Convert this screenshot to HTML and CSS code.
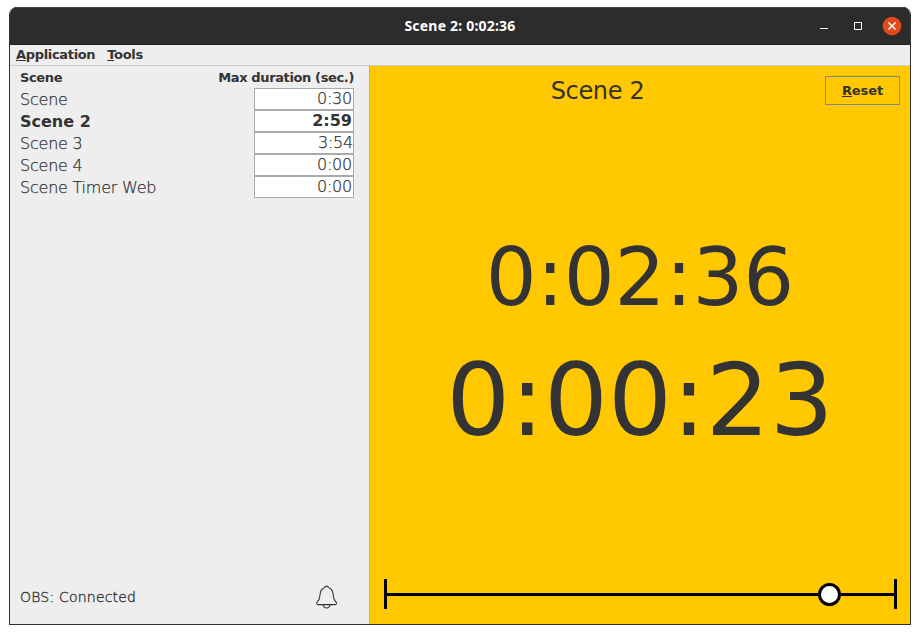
FILE: index.html
```html
<!DOCTYPE html>
<html lang="en">
<head>
<meta charset="utf-8">
<title>Scene 2: 0:02:36</title>
<link rel="stylesheet" href="styles.css">
</head>
<body>
<div class="window">
  <header class="titlebar">
    <span class="title">Scene 2: 0:02:36</span>
    <div class="controls">
      <svg width="10" height="18" viewBox="0 0 10 18"><path d="M1 11.5h8" stroke="#fff"/></svg>
      <svg width="10" height="18" viewBox="0 0 10 18"><path d="M1.5 5.5h7v7h-7z" fill="none" stroke="#fff"/></svg>
      <svg width="20" height="20" viewBox="0 0 20 20"><circle cx="10" cy="10" r="9.3" fill="#e2491b"/><path d="M6.4 6.4l7.2 7.2M13.6 6.4l-7.2 7.2" stroke="#fff" stroke-width="1.4"/></svg>
    </div>
  </header>
  <nav class="menubar"><span><u>A</u>pplication</span><span><u>T</u>ools</span></nav>
  <main class="content">
    <section class="scenes">
      <div class="row head"><span>Scene</span><span>Max duration (sec.)</span></div>
      <div class="row"><span>Scene</span><span class="field">0:30</span></div>
      <div class="row active"><span>Scene 2</span><span class="field">2:59</span></div>
      <div class="row"><span>Scene 3</span><span class="field flush">3:54</span></div>
      <div class="row"><span>Scene 4</span><span class="field">0:00</span></div>
      <div class="row"><span>Scene Timer Web</span><span class="field">0:00</span></div>
      <footer class="status">
        <span>OBS: Connected</span>
        <svg width="22" height="24" viewBox="0 0 22 24" fill="none" stroke="#333" stroke-width="1.1"><path d="M2 19.6C.4 19.4.3 17.8 1.5 16.7 4 14.4 3.6 12 4.2 8.5 4.7 5.2 6.2 3.5 8.8 2.6 9.2.6 12 .6 12.4 2.6 15 3.5 16.5 5.2 17 8.5 17.6 12 17.2 14.4 19.7 16.7 20.9 17.8 20.8 19.4 19.2 19.6Z"/><path d="M7.2 20c.8 4 6 4 6.8 0"/></svg>
      </footer>
    </section>
    <section class="timer">
      <div class="top"><span class="name">Scene 2</span><button class="reset"><u>R</u>eset</button></div>
      <div class="elapsed">0:02:36</div>
      <div class="remaining">0:00:23</div>
      <svg class="progress" width="514" height="30" viewBox="0 0 514 30"><path d="M1.5 0v30M511.5 0v30M2 15.5h509" stroke="#000" stroke-width="3"/><circle cx="445.5" cy="15.5" r="10" fill="#fff" stroke="#000" stroke-width="3"/></svg>
    </section>
  </main>
</div>
</body>
</html>
```
FILE: styles.css
```css
* { box-sizing: border-box; }
body {
  margin: 0;
  padding: 7px 9px 9px;
  height: 634px;
  background: #fff;
  color: #333;
  font-family: "DejaVu Sans", sans-serif;
  overflow: hidden;
}
.window {
  width: 902px;
  height: 618px;
  display: flex;
  flex-direction: column;
  border: 1px solid #333;
  border-top: 0;
  border-radius: 8px 8px 0 0;
  overflow: hidden;
  background: #eee;
}
.titlebar {
  flex: none;
  height: 38px;
  display: grid;
  grid-template-columns: 1fr auto 1fr;
  align-items: center;
  background: #2c2c2c;
  border-top: 1px solid #444;
  border-bottom: 1px solid #222;
  color: #fff;
}
.title {
  grid-column: 2;
  font: bold 14px/18px "Noto Sans", sans-serif;
  letter-spacing: 0.2px;
}
.controls {
  display: flex;
  justify-content: flex-end;
  align-items: center;
  gap: 24px;
  padding: 0 8px 1px 0;
}
.controls svg:last-child { margin-left: -5px; }
.menubar {
  flex: none;
  height: 21px;
  display: flex;
  gap: 12px;
  padding-left: 6px;
  border-bottom: 1px solid #ccc;
  font: bold 13px/19px "DejaVu Sans", sans-serif;
  letter-spacing: -0.33px;
}
.content {
  flex: 1;
  display: grid;
  grid-template-columns: 360px 1fr;
}
.scenes {
  display: flex;
  flex-direction: column;
  padding: 0 15px 0 10px;
  border-right: 1px solid #aaa;
}
.row {
  display: flex;
  justify-content: space-between;
  height: 22px;
  font-size: 16px;
  line-height: 24px;
  font-weight: 200;
  letter-spacing: -0.22px;
  -webkit-text-stroke: 0.25px #333;
}
.row.head {
  font-size: 13px;
  font-weight: bold;
  letter-spacing: -0.37px;
  -webkit-text-stroke: 0;
}
.row.active {
  font-weight: bold;
  letter-spacing: 0;
  -webkit-text-stroke: 0;
}
.field {
  width: 100px;
  height: 22px;
  padding-right: 1px;
  border: 1px solid #aaa;
  background: #fff;
  text-align: right;
  line-height: 19px;
}
.field.flush { padding-right: 0; }
.status {
  margin-top: auto;
  display: flex;
  justify-content: space-between;
  align-items: center;
  height: 24px;
  margin-bottom: 15px;
  padding-right: 16px;
  font-size: 14px;
  font-weight: 200;
  letter-spacing: 0.2px;
  -webkit-text-stroke: 0.35px #333;
}
.status svg { flex: none; }
.timer {
  display: flex;
  flex-direction: column;
  background: #ffc800;
}
.top {
  display: flex;
  padding: 10px 10px 0 0;
  height: 39px;
}
.name {
  flex: 1;
  text-align: center;
  font-size: 24px;
  line-height: 30px;
  letter-spacing: -0.35px;
}
.reset {
  width: 75px;
  height: 29px;
  padding: 0;
  border: 1px solid #7a8a99;
  background: transparent;
  color: #333;
  font: bold 13px/27px "DejaVu Sans", sans-serif;
  letter-spacing: -0.1px;
}
.elapsed {
  margin-top: 126px;
  text-align: center;
  font-size: 80px;
  line-height: 94px;
}
.remaining {
  margin-top: 17px;
  text-align: center;
  font-size: 100.5px;
  line-height: 118px;
}
.progress {
  margin: auto 0 15px 14px;
}
```
